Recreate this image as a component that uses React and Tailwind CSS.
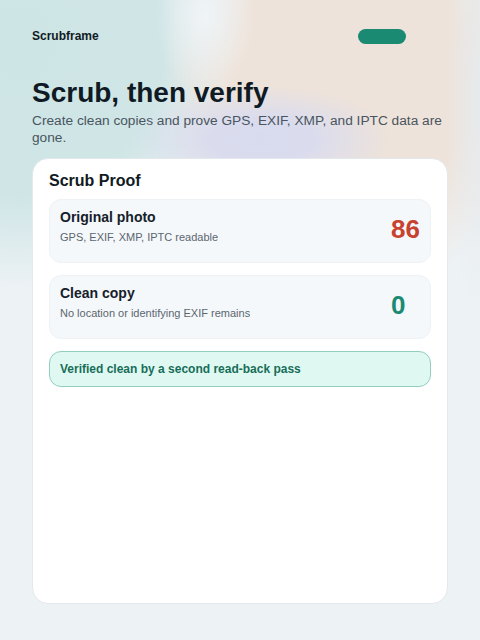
import React from 'react';

const Row = ({ title, sub, value, valueClass }) => (
  <div className="flex items-start justify-between h-[64px] rounded-xl bg-[#f5f8fa] border border-[#eef2f5] pl-[10px] pr-[10px]">
    <div className="pt-[8px]">
      <div className="text-[14px] leading-[18px] font-bold text-[#15202b]">{title}</div>
      <div className="mt-[3px] text-[11px] leading-[16px] text-[#5b6670]">{sub}</div>
    </div>
    <div className={`w-[29px] mt-[14px] text-[26px] leading-[30px] font-bold ${valueClass}`}>{value}</div>
  </div>
);

export default function App() {
  return (
    <div
      className="min-h-screen bg-[#edf2f5] px-8 pt-[28px] pb-[36px] [font-family:'Liberation_Sans',Arial,sans-serif] [background-image:radial-gradient(ellipse_50px_80px_at_205px_15px,#eff4f7_0%,transparent_100%),radial-gradient(ellipse_130px_55px_at_262px_140px,#d8daee_0%,#dadcee_40%,transparent_100%),radial-gradient(ellipse_35px_220px_at_480px_100px,#e6eaed_0%,transparent_100%),radial-gradient(ellipse_190px_220px_at_350px_80px,#eee3da_0%,#eee3da_62%,transparent_100%),radial-gradient(ellipse_230px_250px_at_20px_40px,#cee5e6_0%,#cfe5e6_62%,transparent_100%)]"
    >
      <header className="flex items-center justify-between h-[16px]">
        <span className="text-[12px] leading-[16px] font-bold text-[#111a22]">Scrubframe</span>
        <span className="mr-[42px] h-[15px] w-[48px] rounded-full bg-[#1b8a73]" />
      </header>

      <h1 className="mt-[32px] text-[28px] leading-[34px] font-bold text-[#0f1a24]">Scrub, then verify</h1>
      <p className="mt-[2px] text-[13.7px] leading-[17px] text-[#4a5560]">
        Create clean copies and prove GPS, EXIF, XMP, and IPTC data are gone.
      </p>

      <section className="mt-[12px] h-[446px] rounded-2xl bg-white border border-[#e3e8ec] px-4 pt-[12px]">
        <h2 className="text-[16px] leading-[20px] font-bold text-[#111a22]">Scrub Proof</h2>
        <div className="mt-[8px] flex flex-col gap-3">
          <Row
            title="Original photo"
            sub="GPS, EXIF, XMP, IPTC readable"
            value="86"
            valueClass="text-[#c7432f]"
          />
          <Row
            title="Clean copy"
            sub="No location or identifying EXIF remains"
            value="0"
            valueClass="text-[#1b8a73]"
          />
          <div className="flex items-center h-[36px] rounded-xl bg-[#dff9f2] border border-[#93cfbf] px-[10px]">
            <span className="text-[12px] font-bold text-[#186d59]">Verified clean by a second read-back pass</span>
          </div>
        </div>
      </section>
    </div>
  );
}
